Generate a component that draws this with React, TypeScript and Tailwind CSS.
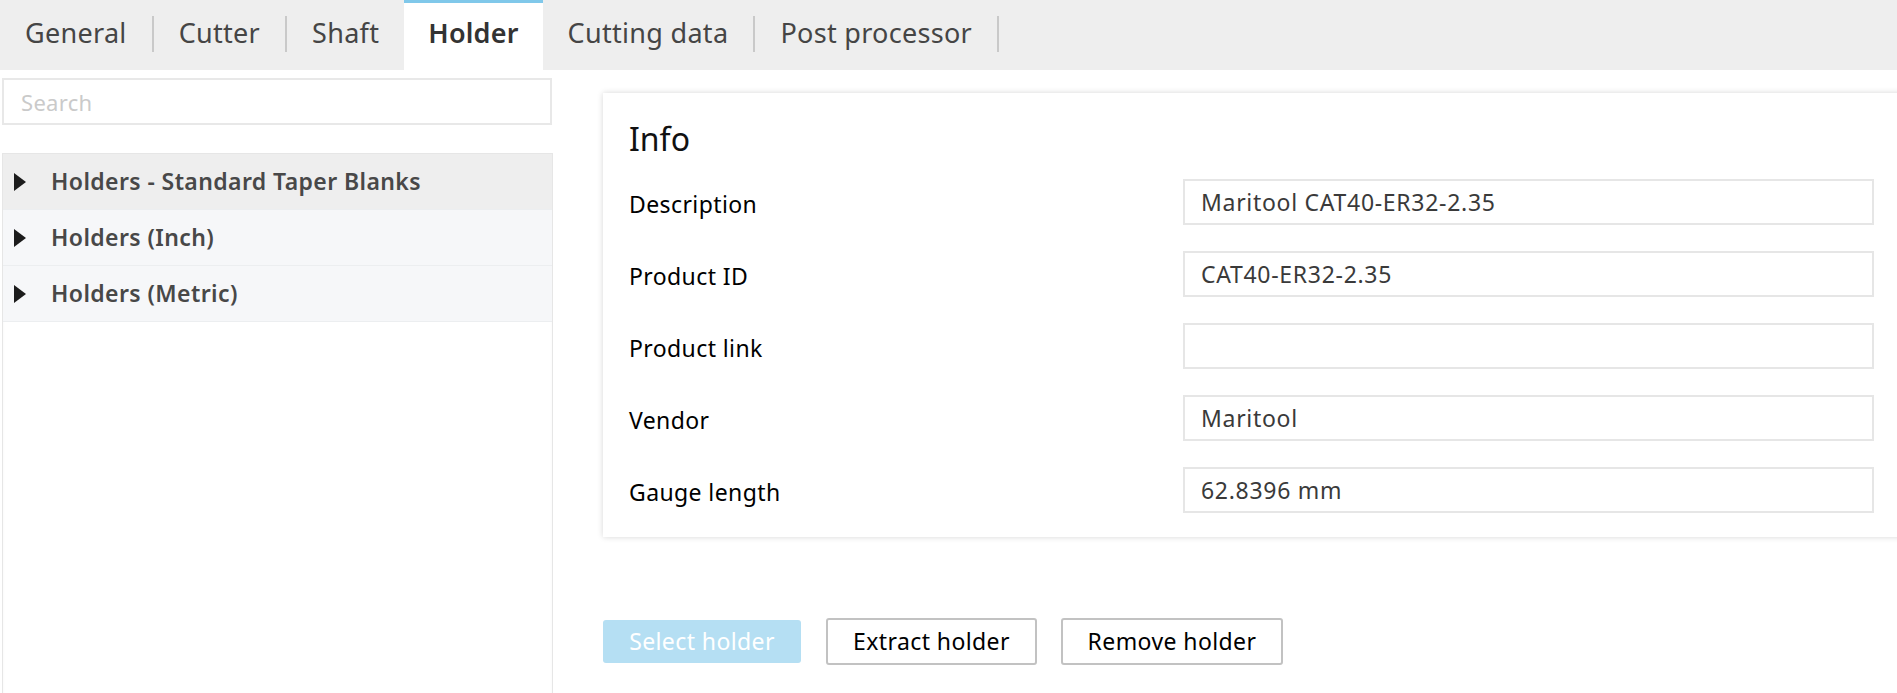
import React from "react";

const tabs = [
  { label: "General", sep: true },
  { label: "Cutter", sep: true },
  { label: "Shaft", sep: false },
  { label: "Holder", sep: false, active: true },
  { label: "Cutting data", sep: true },
  { label: "Post processor", sep: true },
];

const groups = ["Holders - Standard Taper Blanks", "Holders (Inch)", "Holders (Metric)"];

const fields: { label: string; value: string }[] = [
  { label: "Description", value: "Maritool CAT40-ER32-2.35" },
  { label: "Product ID", value: "CAT40-ER32-2.35" },
  { label: "Product link", value: "" },
  { label: "Vendor", value: "Maritool" },
  { label: "Gauge length", value: "62.8396 mm" },
];

function Triangle() {
  return (
    <svg width="12" height="18" viewBox="0 0 12 18" className="shrink-0">
      <path d="M0 0 L12 9 L0 18 Z" fill="#1c1c1c" />
    </svg>
  );
}

export default function App() {
  return (
    <div
      className="w-full h-[693px] overflow-hidden bg-white flex flex-col"
      style={{ fontFamily: '"Noto Sans", "Open Sans", sans-serif' }}
    >
      {/* Tab bar */}
      <div className="h-[70px] shrink-0 bg-[#eeeeee] flex items-stretch">
        {tabs.map((t) => (
          <React.Fragment key={t.label}>
            {t.active ? (
              <div className="bg-white border-t-[3px] border-[#80c8ea] px-[24px] flex items-center pb-[6px] text-[27px] tracking-[0.2px] font-semibold text-[#333333]">
                {t.label}
              </div>
            ) : (
              <div className="px-[25px] flex items-center pb-[3px] text-[27px] tracking-[0.3px] text-[#454545]">
                {t.label}
              </div>
            )}
            {t.sep && <div className="w-[2px] h-[36px] bg-[#c9c9c9] self-center mt-[-2px]" />}
          </React.Fragment>
        ))}
      </div>

      <div className="flex flex-1 min-h-0">
        {/* Left panel */}
        <div className="w-[553px] shrink-0 flex flex-col pt-[8px] pl-[2px]">
          <input
            readOnly
            placeholder="Search"
            className="h-[47px] w-[550px] border-2 border-[#e8e8e8] pl-[17px] text-[22px] tracking-[0.3px] text-[#333] placeholder:text-[#cacaca] outline-none bg-white"
          />
          <div className="mt-[28px] flex-1 border-x border-t border-[#e6e6e6] shadow-[inset_0_2px_3px_rgba(0,0,0,0.04)]">
            {groups.map((g, i) => (
              <div
                key={g}
                className={`h-[56px] flex items-center gap-[25px] pl-[11px] border-b border-[#eceef0] ${
                  i === 0 ? "bg-[#eeeeee]" : "bg-[#f6f7f9]"
                }`}
              >
                <Triangle />
                <span className="text-[23px] font-[580] text-[#484848] tracking-[0.4px]">{g}</span>
              </div>
            ))}
          </div>
        </div>

        {/* Right content */}
        <div className="flex-1 min-w-0 pl-[50px] pt-[23px]">
          <div className="w-[1320px] bg-white shadow-[0_0_6px_rgba(0,0,0,0.16)] pl-[26px] pt-[27px] pb-[24px]">
            <div className="text-[32px] leading-[38px] text-[#111]">Info</div>
            <div className="mt-[21px] grid grid-cols-[554px_691px] gap-y-[26px] items-center">
              {fields.map((f) => (
                <React.Fragment key={f.label}>
                  <div className="text-[23px] tracking-[0.4px] text-black pt-[4px]">{f.label}</div>
                  <input
                    readOnly
                    value={f.value}
                    className="h-[46px] w-[691px] border-2 border-[#e6e6e6] pl-[16px] text-[23px] tracking-[0.7px] text-[#3a3a3a] outline-none bg-white"
                  />
                </React.Fragment>
              ))}
            </div>
          </div>

          <div className="mt-[81px] flex items-center h-[47px]">
            <button className="w-[198px] h-[43px] rounded-[3px] bg-[#b5dff3] text-white text-[23px] tracking-[0.4px]">
              Select holder
            </button>
            <button className="ml-[25px] w-[211px] h-[47px] rounded-[3px] border-2 border-[#c2c2c2] bg-white text-black text-[23px] tracking-[0.4px]">
              Extract holder
            </button>
            <button className="ml-[24px] w-[222px] h-[47px] rounded-[3px] border-2 border-[#c2c2c2] bg-white text-black text-[23px] tracking-[0.4px]">
              Remove holder
            </button>
          </div>
        </div>
      </div>
    </div>
  );
}
